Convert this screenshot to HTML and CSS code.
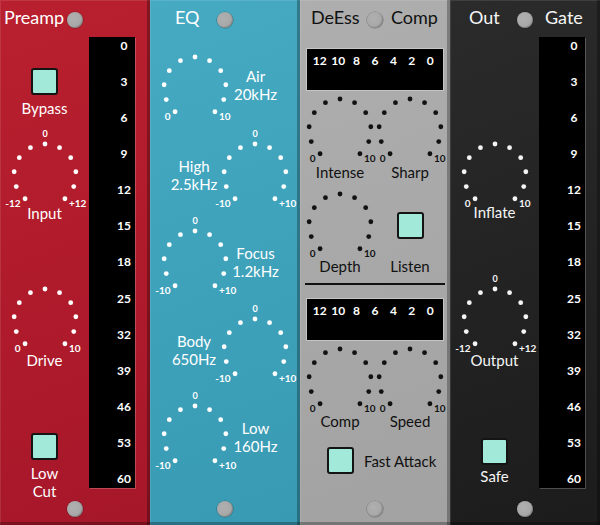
FILE: index.html
```html
<!DOCTYPE html>
<html>
<head>
<meta charset="utf-8">
<link rel="stylesheet" href="styles.css">
</head>
<body>
<svg class="defs" aria-hidden="true">
  <defs>
    <g id="dots">
      <circle cx="0" cy="-31" r="2.4"/>
      <circle cx="14.55" cy="-27.37" r="2.4"/>
      <circle cx="-14.55" cy="-27.37" r="2.4"/>
      <circle cx="25.7" cy="-17.33" r="2.4"/>
      <circle cx="-25.7" cy="-17.33" r="2.4"/>
      <circle cx="30.83" cy="-3.24" r="2.4"/>
      <circle cx="-30.83" cy="-3.24" r="2.4"/>
      <circle cx="28.74" cy="11.61" r="2.4"/>
      <circle cx="-28.74" cy="11.61" r="2.4"/>
      <circle cx="19.93" cy="23.75" r="2.4"/>
      <circle cx="-19.93" cy="23.75" r="2.4"/>
    </g>
  </defs>
</svg>
<div class="rack">
  <!-- Preamp -->
  <section class="panel red">
    <header class="head"><span class="title t-preamp">Preamp</span><i class="screw"></i></header>
    <div class="body split">
      <div class="col">
        <div class="btn m-bypass"></div>
        <div class="label m-bypass-l">Bypass</div>
        <svg class="knob m-input" viewBox="-35 -46 70 80"><use href="#dots"/><text class="s0" y="-38">0</text><text class="slo" x="-24.5" y="31.5">-12</text><text class="shi" x="24" y="31.5">+12</text></svg>
        <div class="label m-under">Input</div>
        <svg class="knob m-drive" viewBox="-35 -46 70 80"><use href="#dots"/><text class="slo" x="-24.5" y="31.5">0</text><text class="shi" x="24" y="31.5">10</text></svg>
        <div class="label m-under2">Drive</div>
        <div class="btn m-lowcut"></div>
        <div class="label m-lowcut-l">Low<br>Cut</div>
      </div>
      <div class="meter-v">
        <span>0</span><span>3</span><span>6</span><span>9</span><span>12</span><span>15</span><span>18</span><span>25</span><span>32</span><span>39</span><span>46</span><span>53</span><span>60</span>
      </div>
    </div>
    <footer class="foot"><i class="screw"></i></footer>
  </section>

  <!-- EQ -->
  <section class="panel blue">
    <header class="head"><span class="title t-eq">EQ</span><i class="screw"></i></header>
    <div class="body eq">
      <div class="eq-row a first">
        <svg class="knob" viewBox="-35 -46 70 80"><use href="#dots"/><text class="slo" x="-24.5" y="31.5">0</text><text class="shi" x="24" y="31.5">10</text></svg>
        <div class="label eq-l air">Air<br>20kHz</div>
      </div>
      <div class="eq-row b">
        <div class="label eq-l">High<br>2.5kHz</div>
        <svg class="knob" viewBox="-35 -46 70 80"><use href="#dots"/><text class="s0" y="-38">0</text><text class="slo" x="-24.5" y="31.5">-10</text><text class="shi" x="24" y="31.5">+10</text></svg>
      </div>
      <div class="eq-row a">
        <svg class="knob" viewBox="-35 -46 70 80"><use href="#dots"/><text class="s0" y="-38">0</text><text class="slo" x="-24.5" y="31.5">-10</text><text class="shi" x="24" y="31.5">+10</text></svg>
        <div class="label eq-l">Focus<br>1.2kHz</div>
      </div>
      <div class="eq-row b">
        <div class="label eq-l">Body<br>650Hz</div>
        <svg class="knob" viewBox="-35 -46 70 80"><use href="#dots"/><text class="s0" y="-38">0</text><text class="slo" x="-24.5" y="31.5">-10</text><text class="shi" x="24" y="31.5">+10</text></svg>
      </div>
      <div class="eq-row a">
        <svg class="knob" viewBox="-35 -46 70 80"><use href="#dots"/><text class="s0" y="-38">0</text><text class="slo" x="-24.5" y="31.5">-10</text><text class="shi" x="24" y="31.5">+10</text></svg>
        <div class="label eq-l">Low<br>160Hz</div>
      </div>
    </div>
    <footer class="foot"><i class="screw"></i></footer>
  </section>

  <!-- DeEss / Comp -->
  <section class="panel gray">
    <header class="head"><span class="title t-deess">DeEss</span><i class="screw"></i><span class="title t-comp">Comp</span></header>
    <div class="body dyn">
      <div class="meter-h m-gr1"><span>12</span><span>10</span><span>8</span><span>6</span><span>4</span><span>2</span><span>0</span></div>
      <div class="pair m-k1">
        <svg class="knob" viewBox="-35 -46 70 80"><use href="#dots"/><text class="slo" x="-24.5" y="31.5">0</text><text class="shi" x="24" y="31.5">10</text></svg>
        <svg class="knob" viewBox="-35 -46 70 80"><use href="#dots"/><text class="slo" x="-24.5" y="31.5">0</text><text class="shi" x="24" y="31.5">10</text></svg>
      </div>
      <div class="pair m-l1"><div class="label">Intense</div><div class="label">Sharp</div></div>
      <div class="pair m-k2">
        <svg class="knob" viewBox="-35 -46 70 80"><use href="#dots"/><text class="slo" x="-24.5" y="31.5">0</text><text class="shi" x="24" y="31.5">10</text></svg>
        <div class="btn listen"></div>
      </div>
      <div class="pair m-l2"><div class="label">Depth</div><div class="label">Listen</div></div>
      <hr class="divider">
      <div class="meter-h m-gr2"><span>12</span><span>10</span><span>8</span><span>6</span><span>4</span><span>2</span><span>0</span></div>
      <div class="pair m-k3">
        <svg class="knob" viewBox="-35 -46 70 80"><use href="#dots"/><text class="slo" x="-24.5" y="31.5">0</text><text class="shi" x="24" y="31.5">10</text></svg>
        <svg class="knob" viewBox="-35 -46 70 80"><use href="#dots"/><text class="slo" x="-24.5" y="31.5">0</text><text class="shi" x="24" y="31.5">10</text></svg>
      </div>
      <div class="pair m-l3"><div class="label">Comp</div><div class="label">Speed</div></div>
      <div class="fast">
        <div class="btn"></div>
        <div class="label">Fast Attack</div>
      </div>
    </div>
    <footer class="foot"><i class="screw"></i></footer>
  </section>

  <!-- Out / Gate -->
  <section class="panel dark">
    <header class="head"><span class="title t-out">Out</span><i class="screw"></i><span class="title t-gate">Gate</span></header>
    <div class="body split">
      <div class="col">
        <svg class="knob m-inflate" viewBox="-35 -46 70 80"><use href="#dots"/><text class="slo" x="-24.5" y="31.5">0</text><text class="shi" x="24" y="31.5">10</text></svg>
        <div class="label m-under">Inflate</div>
        <svg class="knob m-drive" viewBox="-35 -46 70 80"><use href="#dots"/><text class="s0" y="-38">0</text><text class="slo" x="-24.5" y="31.5">-12</text><text class="shi" x="24" y="31.5">+12</text></svg>
        <div class="label m-under2">Output</div>
        <div class="btn m-safe"></div>
        <div class="label m-safe-l">Safe</div>
      </div>
      <div class="meter-v">
        <span>0</span><span>3</span><span>6</span><span>9</span><span>12</span><span>15</span><span>18</span><span>25</span><span>32</span><span>39</span><span>46</span><span>53</span><span>60</span>
      </div>
    </div>
    <footer class="foot"><i class="screw"></i></footer>
  </section>
</div>
</body>
</html>
```

FILE: styles.css
```css
* { box-sizing: border-box; }

body {
  margin: 0;
  background: #1e1e1e;
  font-family: Lato, "Liberation Sans", sans-serif;
}

.defs { display: block; width: 0; height: 0; position: absolute; }

.rack {
  display: flex;
  width: 600px;
  height: 525px;
  overflow: hidden;
}

.panel {
  width: 150px;
  height: 525px;
  flex: none;
  display: flex;
  flex-direction: column;
  box-shadow: inset -3px 0 0 rgba(0, 0, 0, 0.28), inset 0 -3px 0 rgba(0, 0, 0, 0.28), inset 1px 1px 0 rgba(255, 255, 255, 0.1);
}

.red { background: linear-gradient(160deg, #b9202f 0%, #b01b2b 50%, #a6172a 100%); color: #fff; }
.blue { background: linear-gradient(160deg, #46aac3 0%, #3fa2bb 50%, #389ab3 100%); color: #fff; }
.gray { background: linear-gradient(160deg, #aeaeae 0%, #a8a8a8 50%, #a2a2a2 100%); color: #111; }
.dark { background: linear-gradient(160deg, #2b2b2b 0%, #232323 50%, #1c1c1c 100%); color: #f5f5f5; }

/* header */
.head {
  height: 37px;
  padding-top: 8px;
  display: grid;
  grid-template-columns: 67px 16px 1fr;
  align-items: start;
  flex: none;
}

.title {
  font-size: 18px;
  line-height: 18px;
  white-space: nowrap;
}

.t-preamp { margin-left: 4px; }
.t-eq { margin-left: 25px; }
.t-deess { margin-left: 11px; }
.t-out { margin-left: 19px; }
.t-comp { margin-left: 8px; }
.t-gate { margin-left: 12px; }

.screw {
  display: block;
  width: 16px;
  height: 16px;
  margin-top: 4px;
  border-radius: 50%;
  background: radial-gradient(circle at 40% 40%, #b0b0b0, #a2a2a2);
  box-shadow: inset -1px -1px 1px rgba(0, 0, 0, 0.2), 0 0 0 0.6px rgba(0, 0, 0, 0.3);
}

.foot {
  height: 37px;
  padding: 9px 0 0 67px;
  flex: none;
}

.body {
  height: 451px;
  flex: none;
}

/* split panels: control column + tall meter */
.split {
  display: grid;
  grid-template-columns: 89px 46px;
  grid-template-rows: 451px;
}

.col {
  display: flex;
  flex-direction: column;
  align-items: center;
  min-height: 0;
}

.knob {
  display: block;
  width: 70px;
  height: 80px;
  overflow: visible;
  fill: currentColor;
  flex: none;
}

.knob text {
  font-family: Lato, "Liberation Sans", sans-serif;
  font-weight: 700;
  font-size: 10px;
}

.knob .s0 { text-anchor: middle; font-size: 9px; }
.knob .slo { text-anchor: end; }
.knob .shi { text-anchor: start; }

.label {
  font-size: 15px;
  line-height: 18px;
  text-align: center;
  white-space: nowrap;
  flex: none;
}

.btn {
  width: 27px;
  height: 27px;
  flex: none;
  border: 2px solid #141414;
  border-radius: 3px;
  background: #a3e9d9;
}

/* Preamp column */
.m-bypass { margin-top: 31px; }
.m-bypass-l { margin-top: 3.5px; }
.m-input { margin-top: 12.8px; }
.m-under { margin-top: -5.8px; }
.m-drive { margin-top: 52.2px; }
.m-under2 { margin-top: -2.5px; }
.m-lowcut { margin-top: 63.8px; }
.m-lowcut-l { margin-top: 4.2px; }

/* Out column */
.m-inflate { margin-top: 92.2px; }
.m-safe { margin-top: 68.8px; }
.m-safe-l { margin-top: 1.9px; }

.meter-v {
  background: #000;
  color: #fff;
  display: flex;
  flex-direction: column;
  justify-content: space-between;
  padding: 2px 0 2px 24px;
  font-weight: 700;
  font-size: 12px;
  line-height: 14px;
  text-align: center;
  box-shadow: 1px 1px 0 rgba(255, 255, 255, 0.22);
}

/* EQ */
.eq { display: flex; flex-direction: column; }

.eq-row {
  display: flex;
  align-items: flex-start;
  height: 87.4px;
  flex: none;
}

.eq-row.first { margin-top: 4.5px; }
.eq-row.a .knob { margin-left: 10px; }
.eq-row.a .eq-l { width: 60px; margin-left: -4.5px; }
.eq-row.b .eq-l { width: 88px; }
.eq-row.b .knob { margin-left: -18px; }
.eq-l { margin-top: 28px; }
.eq-l.air { margin-top: 25px; }

/* DeEss / Comp */
.dyn { display: flex; flex-direction: column; }

.meter-h {
  height: 41px;
  margin: 0 7px;
  padding: 5px 3.5px 0;
  background: #000;
  color: #fff;
  display: grid;
  grid-template-columns: repeat(7, 1fr);
  align-items: start;
  font-weight: 700;
  font-size: 12px;
  line-height: 14px;
  text-align: center;
  box-shadow: 0 0 0 1px rgba(220, 220, 220, 0.55);
  flex: none;
}

.m-gr1 { margin-top: 12px; }
.m-gr2 { margin-top: 14.3px; }

.pair {
  display: grid;
  grid-template-columns: 70px 70px;
  padding-left: 5px;
  justify-items: center;
  align-items: start;
  flex: none;
}

.m-k1 { margin-top: -6.3px; }
.m-l1 { margin-top: -1.2px; }
.m-k2 { margin-top: -2px; }
.m-l2 { margin-top: -1.5px; }
.m-k3 { margin-top: -6.5px; }
.m-l3 { margin-top: -1.8px; }

.listen { margin-top: 33.5px; }

.divider {
  margin: 8px 5px 0;
  height: 2px;
  border: 0;
  background: #111;
  flex: none;
}

.fast {
  display: flex;
  align-items: center;
  gap: 10px;
  padding-left: 27px;
  margin-top: 17px;
}
```
